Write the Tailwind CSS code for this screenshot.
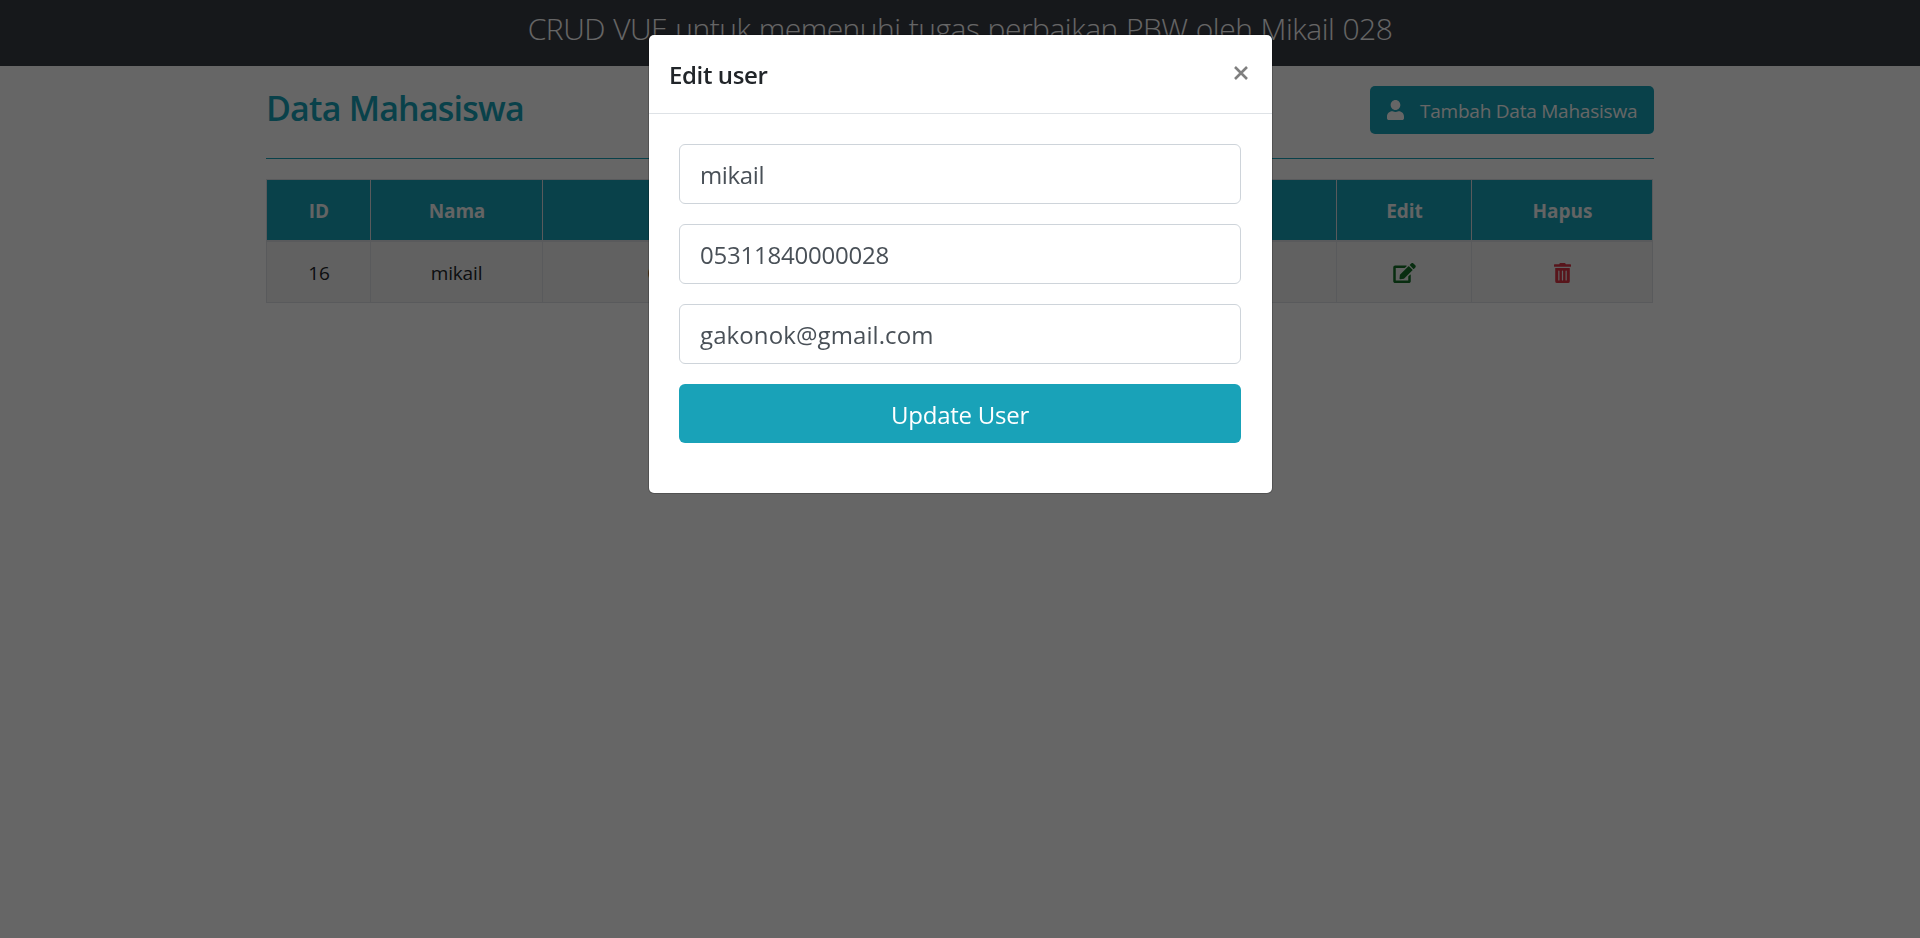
<!DOCTYPE html>
<html lang="id">
<head>
<meta charset="utf-8">
<title>Data Mahasiswa</title>
<script src="https://cdn.jsdelivr.net/npm/@tailwindcss/browser@4"></script>
</head>
<body class="bg-white font-['Open_Sans','Noto_Sans',sans-serif] text-[#212529] text-[19px] h-[938px] overflow-hidden">
  <header class="h-[66px] bg-[#393c44] text-white text-center text-[30px] font-light leading-[58px] tracking-[-0.5px] [word-spacing:0.9px] whitespace-nowrap">CRUD VUE untuk memenuhi tugas perbaikan PBW oleh Mikail 028</header>
  <main class="w-[1388px] mx-auto">
    <div class="flex justify-between pt-5 h-[92px]">
      <h3 class="text-[#17a2b8] text-[34px] font-semibold leading-[45px] tracking-[-0.8px] whitespace-nowrap">Data Mahasiswa</h3>
      <button class="flex items-center w-[284px] h-12 bg-[#17a2b8] text-white rounded-[5px] pl-[17px] tracking-[-0.23px] whitespace-nowrap">
        <svg class="w-[17px] h-5 mr-4" viewBox="0 0 448 512" preserveAspectRatio="none" fill="currentColor"><path d="M224 256c70.700 0 128-57.300 128-128S294.700 0 224 0 96 57.300 96 128s57.300 128 128 128zm89.600 32h-16.700c-22.200 10.200-46.900 16-72.900 16s-50.600-5.800-72.900-16h-16.700C60.200 288 0 348.200 0 422.400V464c0 26.500 21.500 48 48 48h352c26.500 0 48-21.500 48-48v-41.600c0-74.200-60.200-134.400-134.400-134.400z"/></svg>
        <span class="pt-0.5">Tambah Data Mahasiswa</span>
      </button>
    </div>
    <hr class="border-0 h-px bg-[#17a2b8] mb-5">
    <table class="w-[1387px] table-fixed border-collapse text-center border border-[#dee2e6]">
      <colgroup><col class="w-[104px]"><col class="w-[172px]"><col class="w-[362px]"><col class="w-[432px]"><col class="w-[135px]"><col class="w-[181px]"></colgroup>
      <thead>
        <tr class="h-[61px] bg-[#17a2b8] text-[#f8f9fa] font-bold">
          <th class="pt-0.5 pl-px border border-b-2 border-[#dee2e6]">ID</th><th class="pt-0.5 pl-px tracking-[-0.2px] border border-b-2 border-[#dee2e6]">Nama</th><th class="pt-0.5 border border-b-2 border-[#dee2e6]">NRP</th><th class="pt-0.5 border border-b-2 border-[#dee2e6]">Email</th><th class="pt-0.5 pl-px border border-b-2 border-[#dee2e6]">Edit</th><th class="pt-0.5 pl-px border border-b-2 border-[#dee2e6]">Hapus</th>
        </tr>
      </thead>
      <tbody>
        <tr class="h-[62px] bg-[#f2f2f2]">
          <td class="pt-0.5 pl-px border border-[#dee2e6]">16</td><td class="pt-0.5 tracking-[-0.15px] border border-[#dee2e6]">mikail</td><td class="pt-0.5 border border-[#dee2e6]">05311840000028</td><td class="pt-0.5 border border-[#dee2e6]">gakonok@gmail.com</td>
          <td class="border pt-0.5 border-[#dee2e6]"><svg class="w-[23px] h-5 mx-auto text-[#157228]" viewBox="0 0 576 512" fill="currentColor"><path d="M402.600 83.200l90.200 90.200c3.800 3.800 3.800 10 0 13.800L274.400 405.600l-92.800 10.300c-12.400 1.400-22.900-9.100-21.500-21.500l10.300-92.800L388.800 83.200c3.800-3.800 10-3.800 13.800 0zm162-22.900l-48.800-48.800c-15.200-15.200-39.900-15.200-55.200 0l-35.400 35.400c-3.800 3.800-3.800 10 0 13.800l90.200 90.200c3.800 3.800 10 3.800 13.800 0l35.400-35.400c15.200-15.300 15.200-40 0-55.200zM384 346.200V448H64V128h229.800c3.200 0 6.200-1.300 8.500-3.500l40-40c7.600-7.600 2.200-20.500-8.500-20.500H48C21.500 64 0 85.500 0 112v352c0 26.500 21.500 48 48 48h352c26.500 0 48-21.500 48-48V306.200c0-10.700-12.900-16-20.500-8.500l-40 40c-2.200 2.300-3.500 5.300-3.500 8.500z"/></svg></td>
          <td class="border pt-0.5 border-[#dee2e6]"><svg class="w-[17px] h-5 mx-auto text-[#dc3545]" viewBox="0 0 448 512" preserveAspectRatio="none" fill="currentColor" fill-rule="evenodd"><path d="M32 464a48 48 0 0 0 48 48h288a48 48 0 0 0 48-48V128H32zm272-256a16 16 0 0 1 32 0v224a16 16 0 0 1-32 0zm-96 0a16 16 0 0 1 32 0v224a16 16 0 0 1-32 0zm-96 0a16 16 0 0 1 32 0v224a16 16 0 0 1-32 0zM432 32H312l-9.400-18.700A24 24 0 0 0 281.100 0H166.800a23.700 23.700 0 0 0-21.400 13.300L136 32H16A16 16 0 0 0 0 48v32a16 16 0 0 0 16 16h416a16 16 0 0 0 16-16V48a16 16 0 0 0-16-16z"/></svg></td>
        </tr>
      </tbody>
    </table>
  </main>

  <div class="fixed inset-0 bg-black/60 pt-[35px]">
    <section class="w-[623px] h-[458px] ml-[649px] bg-white rounded-[5px] shadow-[0_0_0_1px_rgba(0,0,0,0.2)]">
      <div class="flex justify-between h-[79px] pl-5 pr-6 pt-[22px] border-b border-[#dee2e6]">
        <h5 class="text-[24px] leading-[36px] font-semibold tracking-[-0.38px] whitespace-nowrap">Edit user</h5>
        <button class="h-8" aria-label="Close"><svg class="w-[14px] h-[14px] text-[#7f7f7f]" viewBox="0 0 14 14" stroke="currentColor" stroke-width="2.600"><path d="M1 1L13 13M13 1L1 13"/></svg></button>
      </div>
      <form class="flex flex-col gap-5 pl-[30px] pr-[31px] pt-[30px] text-[24px] text-[#495057] whitespace-nowrap">
        <div class="h-[60px] border border-[#ced4da] rounded-[6px] pl-5 leading-[60px] tracking-[-0.35px]">mikail</div>
        <div class="h-[60px] border border-[#ced4da] rounded-[6px] pl-5 leading-[60px] tracking-[-0.22px]">05311840000028</div>
        <div class="h-[60px] border border-[#ced4da] rounded-[6px] pl-5 leading-[60px] tracking-[0.1px]">gakonok@gmail.com</div>
        <button type="button" class="h-[59px] pt-0.5 bg-[#19a2b8] text-white rounded-[6px] tracking-[-0.25px]">Update User</button>
      </form>
    </section>
  </div>
</body>
</html>
